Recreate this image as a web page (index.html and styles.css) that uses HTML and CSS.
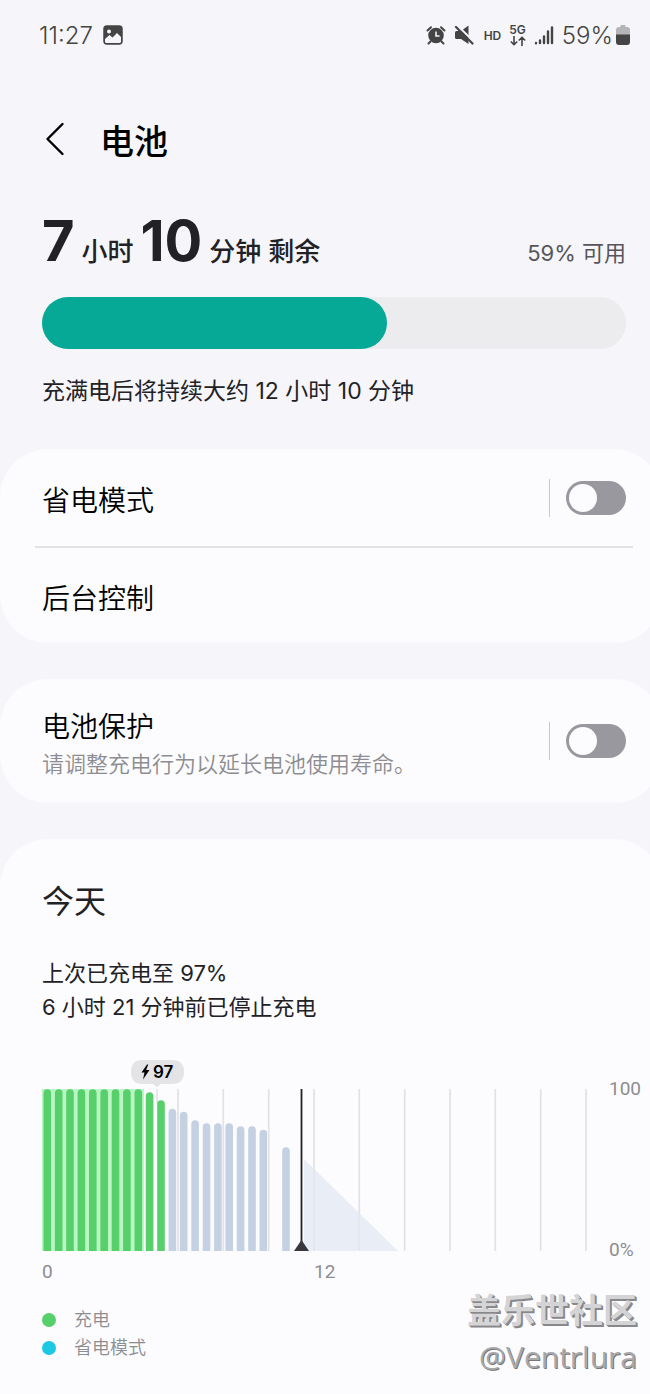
FILE: index.html
```html
<!DOCTYPE html>
<html lang="zh-CN">
<head>
    <meta charset="UTF-8">
    <meta name="viewport" content="width=device-width, initial-scale=1.0">
    <title>电池</title>
    <link rel="stylesheet" href="styles.css">
</head>
<body>
    <div class="status-bar">
        <span class="clock">11:27</span>
        <svg class="photo-icon" width="20" height="20" viewBox="0 0 20 20">
            <rect x="1" y="1" width="18" height="18" rx="3" fill="#444" stroke="#444" stroke-width="1.5"/>
            <circle cx="6" cy="6.5" r="2" fill="#f6f6fa"/>
            <path d="M2 14l4.500-4 3 2.500 4.500-4.500 4 4v4.500q0 1.500-1.500 1.500h-13q-1.500 0-1.500-1.500z" fill="#f6f6fa"/>
        </svg>
        <div class="status-icons">
            <svg width="20" height="20" viewBox="0 0 20 20">
                <circle cx="10" cy="10.500" r="7.800" fill="#444"/>
                <path d="M1.500 5.500L5 2.200M18.500 5.500L15 2.200M4.500 16.500L2.500 18.500M15.500 16.500l2 2" stroke="#444" stroke-width="2" stroke-linecap="round"/>
                <path d="M10 6.500v4.500h3.500" fill="none" stroke="#f6f6fa" stroke-width="1.600"/>
            </svg>
            <svg class="mute" width="20" height="20" viewBox="0 0 20 20">
                <path d="M2.500 6h4.500L14.500 .5v18.500L7 14H2.500q-1.500 0-1.500-1.500v-5Q1 6 2.500 6z" fill="#444"/>
                <path d="M4.500 1.500L20 17" stroke="#f6f6fa" stroke-width="2"/>
                <path d="M2 2l16.500 16.500" stroke="#444" stroke-width="2.200" stroke-linecap="round"/>
            </svg>
            <span class="hd">HD</span>
            <span class="network">
                5G
                <svg width="16" height="10" viewBox="0 0 16 10" fill="none" stroke="#444" stroke-width="1.600">
                    <path d="M4 0v8.500M.8 5.500L4 8.700l3.200-3.200M12 10V1.500M8.800 4.500L12 1.300l3.200 3.200"/>
                </svg>
            </span>
            <svg class="signal" width="20" height="20" viewBox="0 0 20 20" stroke="#444" stroke-width="2.400" stroke-linecap="round">
                <path d="M2 18v.2M6 15.500V18M10 11.500V18M14 6.500V18M18 2.500V18"/>
            </svg>
            <span class="percent">59%</span>
            <svg class="battery-icon" width="14" height="20" viewBox="0 0 14 20">
                <path d="M4.500 0h5v2H11q3 0 3 3v5H0V5q0-3 3-3h1.500z" fill="#b5b5b8"/>
                <path d="M0 9.500h14V17q0 3-3 3H3q-3 0-3-3z" fill="#444"/>
            </svg>
        </div>
    </div>

    <header class="title-bar">
        <button class="back" aria-label="返回">
            <svg width="20" height="34" viewBox="0 0 20 34">
                <path d="M17.500 2L2.500 17l15 15" fill="none" stroke="#000" stroke-width="2.400" stroke-linecap="round" stroke-linejoin="round"/>
            </svg>
        </button>
        <h1>电池</h1>
    </header>

    <section class="summary">
        <div class="remaining">
            <div class="time"><b>7</b> 小时 <b>10</b> 分钟 剩余</div>
            <div class="available">59% 可用</div>
        </div>
        <div class="level"><div class="level-fill" style="width: 59%"></div></div>
        <p>充满电后将持续大约 12 小时 10 分钟</p>
    </section>

    <section class="card">
        <div class="row">
            <label class="row-text" for="saver">省电模式</label>
            <div class="switch-box"><input type="checkbox" role="switch" class="switch" id="saver"></div>
        </div>
        <div class="row divided">
            <span class="row-text">后台控制</span>
        </div>
    </section>

    <section class="card">
        <div class="row protect">
            <div class="row-text">
                <label for="protect">电池保护</label>
                <p class="hint">请调整充电行为以延长电池使用寿命。</p>
            </div>
            <div class="switch-box"><input type="checkbox" role="switch" class="switch" id="protect"></div>
        </div>
    </section>

    <section class="card today">
        <h2>今天</h2>
        <p>上次已充电至 97%<br>6 小时 21 分钟前已停止充电</p>

        <svg class="chart" viewBox="0 0 608 226">
            <defs>
                <clipPath id="plot"><rect x="-1" y="31" width="560" height="162"/></clipPath>
            </defs>
            <!-- hours grid -->
            <path d="M0 31V193M45.300 31V193M90.700 31V193M136 31V193M181.300 31V193M226.700 31V193M272 31V193M317.300 31V193M362.700 31V193M408 31V193M453.300 31V193M498.700 31V193M544 31V193" stroke="#e1e1e6" stroke-width="1.700"/>
            <path d="M115 31V45" stroke="#e1e1e6" stroke-width="1.500"/>
            <rect x="-1" y="31" width="103" height="162" fill="#b9f6c4"/>
            <!-- forecast -->
            <path d="M262 101L356 193H262z" fill="#dfe7f2" fill-opacity=".7"/>
            <g clip-path="url(#plot)" fill="none" stroke-width="7.600" stroke-linecap="round">
                <path d="M5.300 35V200M16.700 35V200M28 35V200M39.400 35V200M50.800 35V200M62.200 35V200M73.500 35V200M84.900 35V200M96.300 35V200M107.600 38V200M119 46V200" stroke="#57cf6b"/>
                <path d="M130.400 54.500V200M141.700 57.500V200M153.100 66V200M164.500 69V200M175.900 69V200M187.200 69V200M198.600 72V200M210 72V200M221.300 75.500V200M244 93V200" stroke="#c4d1e3"/>
            </g>
            <!-- current time -->
            <path d="M259.500 31V190" stroke="#222" stroke-width="1.800"/>
            <path d="M259.500 182L267 193H252z" fill="#38383c"/>
            <!-- last charge bubble -->
            <path d="M101 2h29q12 0 12 12t-12 12h-11l-4 3-4-3h-10q-12 0-12-12t12-12z" fill="#e4e4e7"/>
            <path d="M105 6.500L99.500 14.500h3L101 21.500l6.500-9.500h-3.300l2-5.500z" fill="#000"/>
            <text x="111" y="20" class="bubble-text">97</text>
            <g class="axis">
                <text x="567" y="37">100</text>
                <text x="567" y="198">0%</text>
                <text x="0" y="220">0</text>
                <text x="272" y="220">12</text>
            </g>
        </svg>

        <ul class="legend">
            <li class="charging">充电</li>
            <li class="saving">省电模式</li>
        </ul>
        <div class="watermark">
            <strong>盖乐世社区</strong>
            <span>@Ventrlura</span>
        </div>
    </section>
</body>
</html>
```
FILE: styles.css
```css
* {
    box-sizing: border-box;
}
body {
    margin: 0;
    font-family: Inter, "Noto Sans CJK SC", sans-serif;
    font-size: 22px;
    color: #222226;
    background-color: #f6f6fa;
    overflow-x: hidden;
}
h1, h2, p, ul {
    margin: 0;
    padding: 0;
}
.status-bar {
    display: flex;
    align-items: center;
    height: 70px;
    padding: 0 20px 0 39px;
    font-size: 24px;
    font-weight: 350;
    color: #444;
}
.photo-icon {
    margin-left: 10px;
}
.status-icons {
    display: flex;
    align-items: center;
    margin-left: auto;
}
.mute {
    margin-left: 8px;
}
.hd {
    margin-left: 10px;
    font-size: 12px;
    font-weight: 600;
}
.network {
    display: flex;
    flex-direction: column;
    align-items: center;
    margin-left: 8px;
    font-size: 12px;
    line-height: 12px;
    font-weight: 600;
}
.signal {
    margin-left: 8px;
}
.percent {
    margin-left: 8px;
}
.battery-icon {
    margin-left: 3px;
}
.title-bar {
    display: flex;
    align-items: center;
    height: 138px;
    padding-left: 45px;
}
.back {
    display: flex;
    padding: 0;
    border: none;
    background: none;
    cursor: pointer;
}
h1 {
    margin-left: 35px;
    font-size: 34px;
    font-weight: 500;
    color: #000;
}
.summary {
    padding: 0 24px 0 42px;
}
.remaining {
    display: flex;
    justify-content: space-between;
    align-items: baseline;
    padding-top: 1px;
    line-height: 64px;
}
.time {
    font-size: 26px;
    font-weight: 500;
}
.time b {
    font-size: 56px;
    font-weight: 700;
}
.available {
    color: #55555a;
}
.level {
    height: 52px;
    margin: 12px 0 24px;
    border-radius: 26px;
    background-color: #ececef;
}
.level-fill {
    height: 100%;
    border-radius: 26px;
    background-color: #06a996;
}
.summary p {
    font-size: 23px;
    line-height: 36px;
}
.card {
    position: relative;
    margin: 36px -12px 0 0;
    padding-right: 12px;
    border-radius: 48px;
    background-color: #fcfcff;
}
.summary + .card {
    margin-top: 40px;
}
.row {
    display: flex;
    align-items: center;
    justify-content: space-between;
    min-height: 97px;
    padding: 0 24px 0 42px;
    font-size: 28px;
    font-weight: 350;
    line-height: 40px;
    color: #000;
}
.row-text {
    padding-top: 6px;
}
.divided {
    margin: 0 17px 0 35px;
    padding: 0 7px;
    border-top: 2px solid #e2e2e7;
}
.protect {
    min-height: 124px;
}
.hint {
    font-size: 22px;
    line-height: 34px;
    color: #8c8c91;
}
.switch-box {
    display: flex;
    align-items: center;
    height: 38px;
    padding-left: 16px;
    border-left: 1px solid #c9c9cd;
}
.switch {
    appearance: none;
    width: 60px;
    height: 34px;
    margin: 0;
    padding: 3px;
    border-radius: 17px;
    background-color: #99989f;
    cursor: pointer;
}
.switch::before {
    content: "";
    display: block;
    width: 28px;
    height: 28px;
    border-radius: 50%;
    background-color: #fcfcff;
}
.switch:checked {
    background-color: #06a996;
}
.switch:checked::before {
    margin-left: auto;
}
.today {
    padding: 39px 12px 33px 42px;
    border-radius: 48px 48px 0 0;
}
h2 {
    font-size: 32px;
    line-height: 48px;
    font-weight: 400;
}
.today p {
    margin-top: 30px;
    line-height: 34px;
}
.chart {
    display: block;
    width: 100%;
    margin-top: 34px;
}
.bubble-text {
    font-size: 17px;
    font-weight: 600;
    fill: #000;
}
.axis {
    font-family: Roboto, sans-serif;
    font-size: 19px;
    fill: #8c8c91;
}
.legend {
    margin-top: 22px;
    list-style: none;
    font-size: 18px;
    font-weight: 350;
    line-height: 28px;
    color: #8c8c91;
}
.legend li {
    display: flex;
    align-items: center;
    gap: 18px;
}
.legend li::before {
    content: "";
    width: 14px;
    height: 14px;
    border-radius: 50%;
}
.charging::before {
    background-color: #57cf6b;
}
.saving::before {
    background-color: #1cc8e2;
}
/* stamp over the lower right corner */
.watermark {
    position: absolute;
    right: 25px;
    bottom: 15px;
    display: flex;
    flex-direction: column;
    align-items: flex-end;
    color: #d4d4d6;
    text-shadow: 1px 1px 0 #77777a;
}
.watermark strong {
    font-size: 34px;
    line-height: 46px;
    text-shadow: 1px 1px 0 #88888b, 2px 2px 0 #88888b;
}
.watermark span {
    font-family: "Open Sans", sans-serif;
    font-size: 30px;
    line-height: 46px;
    color: #a9a9ac;
}
```
